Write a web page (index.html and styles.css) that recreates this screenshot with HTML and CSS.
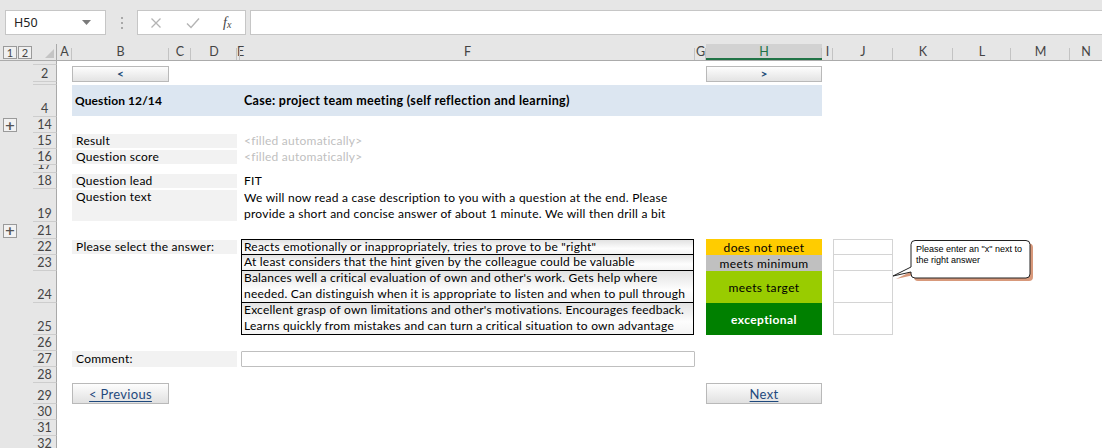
FILE: index.html
```html
<!DOCTYPE html>
<html>
<head>
<meta charset="utf-8">
<link rel="stylesheet" href="styles.css">
</head>
<body>
<div class="app">
  <div class="fbar">
    <div class="namebox">
      <span class="nb-text">H50</span>
      <svg class="nb-caret" width="9" height="5" viewBox="0 0 9 5"><path d="M0 0H9L4.5 5Z" fill="#7a7a7a"/></svg>
    </div>
    <div class="grip"><i></i><i></i><i></i></div>
    <div class="fxbox">
      <svg class="fx-icon" width="12" height="12" viewBox="0 0 12 12"><path d="M1.5 1.5L10.5 10.5M10.5 1.5L1.5 10.5" stroke="#b4b4b4" stroke-width="1.3" fill="none"/></svg>
      <svg class="fx-icon" width="14" height="12" viewBox="0 0 14 12"><path d="M1 6.5L5 10.5L13 1.5" stroke="#b4b4b4" stroke-width="1.4" fill="none"/></svg>
      <span class="fx">f<sub>x</sub></span>
    </div>
    <div class="finput"></div>
  </div>

  <div class="sheet">
    <div class="row hdr">
      <div class="ol hdr-ol"><span class="lvl">1</span><span class="lvl">2</span></div>
      <div class="corner"><svg width="9" height="9" viewBox="0 0 9 9"><path d="M9 0V9H0Z" fill="#c4c4c4"/></svg></div>
      <div class="ch">A</div>
      <div class="ch">B</div>
      <div class="ch">C</div>
      <div class="ch">D</div>
      <div class="ch ch-e">E</div>
      <div class="ch">F</div>
      <div class="ch">G</div>
      <div class="ch ch-sel">H</div>
      <div class="ch">I</div>
      <div class="ch">J</div>
      <div class="ch">K</div>
      <div class="ch">L</div>
      <div class="ch">M</div>
      <div class="ch ch-last">N</div>
    </div>

    <div class="row h4"><div class="ol"></div><div class="rh">1</div></div>

    <div class="row h17">
      <div class="ol"></div><div class="rh">2</div>
      <div class="gB navcell"><div class="navbtn">&lt;</div></div>
      <div class="gH navcell"><div class="navbtn">&gt;</div></div>
    </div>

    <div class="row h3"><div class="ol"></div><div class="rh rh-empty"></div></div>

    <div class="row h32">
      <div class="ol"></div><div class="rh">4</div>
      <div class="band"></div>
      <div class="gBD bandtxt bandtxt-q">Question 12/14</div>
      <div class="gF bandtxt">Case: project team meeting (self reflection and learning)</div>
    </div>

    <div class="row h16">
      <div class="ol"><span class="plus">+</span></div><div class="rh">14</div>
    </div>

    <div class="row h16">
      <div class="ol"></div><div class="rh">15</div>
      <div class="gBD lbl">Result</div>
      <div class="gF txt auto">&lt;filled automatically&gt;</div>
    </div>

    <div class="row h16">
      <div class="ol"></div><div class="rh">16</div>
      <div class="gBD lbl">Question score</div>
      <div class="gF txt auto">&lt;filled automatically&gt;</div>
    </div>

    <div class="row h8">
      <div class="ol"></div><div class="rh">17</div>
    </div>

    <div class="row h16">
      <div class="ol"></div><div class="rh">18</div>
      <div class="gBD lbl">Question lead</div>
      <div class="gF txt">FIT</div>
    </div>

    <div class="row h33">
      <div class="ol"></div><div class="rh">19</div>
      <div class="gBD lbl">Question text</div>
      <div class="gF txt">We will now read a case description to you with a question at the end. Please<br>provide a short and concise answer of about 1 minute. We will then drill a bit</div>
    </div>

    <div class="row h17">
      <div class="ol"><span class="plus">+</span></div><div class="rh">21</div>
    </div>

    <div class="row h16">
      <div class="ol"></div><div class="rh">22</div>
      <div class="gBD lbl">Please select the answer:</div>
      <div class="gF ans ans-first">Reacts emotionally or inappropriately, tries to prove to be "right"</div>
      <div class="gH rate r-no">does not meet</div>
      <div class="gJ xbox xbox-first"></div>
    </div>

    <div class="row h16">
      <div class="ol"></div><div class="rh">23</div>
      <div class="gF ans">At least considers that the hint given by the colleague could be valuable</div>
      <div class="gH rate r-min">meets minimum</div>
      <div class="gJ xbox"></div>
    </div>

    <div class="row h32">
      <div class="ol"></div><div class="rh">24</div>
      <div class="gF ans">Balances well a critical evaluation of own and other's work. Gets help where<br>needed. Can distinguish when it is appropriate to listen and when to pull through</div>
      <div class="gH rate r-tgt">meets target</div>
      <div class="gJ xbox"></div>
    </div>

    <div class="row h32">
      <div class="ol"></div><div class="rh">25</div>
      <div class="gF ans">Excellent grasp of own limitations and other's motivations. Encourages feedback.<br>Learns quickly from mistakes and can turn a critical situation to own advantage</div>
      <div class="gH rate r-exc">exceptional</div>
      <div class="gJ xbox"></div>
    </div>

    <div class="row h16"><div class="ol"></div><div class="rh">26</div></div>

    <div class="row h16">
      <div class="ol"></div><div class="rh">27</div>
      <div class="gBD lbl lbl-full">Comment:</div>
      <div class="gF comment"></div>
    </div>

    <div class="row h16"><div class="ol"></div><div class="rh">28</div></div>

    <div class="row h21">
      <div class="ol"></div><div class="rh">29</div>
      <div class="gB"><div class="bigbtn"><span>&lt; Previous</span></div></div>
      <div class="gH"><div class="bigbtn"><span>Next</span></div></div>
    </div>

    <div class="row h16"><div class="ol"></div><div class="rh">30</div></div>
    <div class="row h16"><div class="ol"></div><div class="rh">31</div></div>
    <div class="row h16"><div class="ol"></div><div class="rh">32</div></div>
  </div>

  <div class="callout">
    <svg class="callout-bg" width="145" height="46" viewBox="0 0 145 46">
      <path d="M23 1.5H134Q138 1.5 138 5.5V35Q138 39 134 39H23Q19 39 19 35V33L1 37L19 28V5.5Q19 1.5 23 1.5Z" fill="#d8997b" transform="translate(3 3)"/>
      <path d="M23 1.5H134Q138 1.5 138 5.5V35Q138 39 134 39H23Q19 39 19 35V33L1 37L19 28V5.5Q19 1.5 23 1.5Z" fill="#fff" stroke="#222" stroke-width="1"/>
    </svg>
    <div class="callout-text">Please enter an "x" next to<br>the right answer</div>
  </div>
</div>
</body>
</html>
```

FILE: styles.css
```css
* {
  box-sizing: border-box;
  margin: 0;
  padding: 0;
}

html, body {
  width: 1102px;
  height: 448px;
  overflow: hidden;
  background: #fff;
}

body {
  font-family: Lato, "Liberation Sans", sans-serif;
  font-size: 12px;
  color: #000;
}

.app {
  position: relative;
  width: 1102px;
  height: 448px;
  overflow: hidden;
}

/* formula bar */
.fbar {
  height: 44px;
  background: #e6e6e6;
  display: flex;
  align-items: flex-start;
  padding: 10px 0 0 5px;
}

.namebox {
  width: 101px;
  height: 25px;
  background: #fff;
  border: 1px solid #c6c6c6;
  display: flex;
  align-items: center;
  justify-content: space-between;
  padding: 0 14px 0 8px;
  font-family: "Noto Sans", "Open Sans", sans-serif;
  font-size: 12.5px;
  color: #222;
}

.grip {
  width: 31px;
  height: 25px;
  display: flex;
  flex-direction: column;
  align-items: center;
  justify-content: center;
  gap: 3px;
}

.grip i {
  display: block;
  width: 2px;
  height: 2px;
  background: #a8a8a8;
}

.fxbox {
  width: 109px;
  height: 25px;
  background: #fff;
  border: 1px solid #c6c6c6;
  display: flex;
  align-items: center;
  padding-left: 12px;
  gap: 24px;
}

.fx {
  font-family: "Liberation Serif", serif;
  font-style: italic;
  font-size: 14px;
  color: #444;
  margin-left: -1px;
}

.fx sub {
  font-size: 10px;
  vertical-align: -1px;
}

.finput {
  flex: 1;
  margin-left: 4px;
  height: 25px;
  background: #fff;
  border: 1px solid #c6c6c6;
  border-right: none;
}

/* sheet grid */
.row {
  display: grid;
  grid-template-columns: 33px 24px 15px 97px 22px 46px 3px 455px 11px 116px 11px 60px 60px 58px 59px 1fr;
  grid-template-rows: minmax(0, 1fr);
  overflow: hidden;
}

.row > * {
  grid-row: 1;
  min-width: 0;
  min-height: 0;
}

.h3 { height: 3px; }
.h4 { height: 4px; }
.h8 { height: 8px; }
.h16 { height: 16px; }
.h17 { height: 17px; }
.h21 { height: 21px; }
.h32 { height: 32px; }
.h33 { height: 33px; }

.ol {
  grid-column: 1;
  background: #e6e6e6;
  display: flex;
  align-items: center;
  padding-left: 3px;
}

.rh {
  grid-column: 2;
  background: #e6e6e6;
  border-right: 1px solid #a9a9a9;
  border-bottom: 1px solid #cdcdcd;
  display: flex;
  align-items: flex-end;
  justify-content: center;
  line-height: 15px;
  font-size: 12.5px;
  color: #444;
  overflow: hidden;
}

.plus {
  width: 14px;
  height: 14px;
  border: 1px solid #9a9a9a;
  background: #f2f2f2;
  display: flex;
  align-items: center;
  justify-content: center;
  font-family: "DejaVu Sans", sans-serif;
  font-size: 13px;
  font-weight: bold;
  line-height: 1;
  color: #555;
}

/* column headers */
.hdr {
  height: 17px;
  background: #e6e6e6;
  border-bottom: 1px solid #ababab;
}

.hdr-ol {
  gap: 1px;
  padding-left: 3px;
}

.lvl {
  width: 14px;
  height: 13px;
  border: 1px solid #9a9a9a;
  background: #f0f0f0;
  font-size: 11px;
  line-height: 11px;
  text-align: center;
  color: #444;
}

.corner {
  grid-column: 2;
  display: flex;
  align-items: flex-end;
  justify-content: flex-end;
  padding: 0 2px 2px 0;
  border-right: 1px solid #a9a9a9;
}

.ch {
  position: relative;
  text-align: center;
  font-size: 12.5px;
  line-height: 16px;
  color: #444;
  white-space: nowrap;
}

.ch::after {
  content: "";
  position: absolute;
  right: 0;
  top: 4px;
  bottom: 0;
  width: 1px;
  background: #c3c3c3;
}

.ch-e {
  text-align: left;
  text-indent: 0;
  overflow: visible;
}

.ch-sel {
  background: #d2d2d2;
  color: #217346;
  border-bottom: 2px solid #217346;
}

.ch-last::after {
  display: none;
}

/* column placement */
.gB { grid-column: 4; }
.gBD { grid-column: 4 / 7; }
.gF { grid-column: 8; }
.gH { grid-column: 10; }
.gJ { grid-column: 12; }

/* nav buttons */
.navcell {
  padding-top: 1px;
}

.navbtn {
  height: 16px;
  border: 1px solid #b9b9b9;
  background: linear-gradient(#fdfdfd, #e3e3e3);
  color: #1f4e79;
  font-size: 12px;
  font-weight: bold;
  text-align: center;
  line-height: 14px;
}

/* band */
.band {
  grid-column: 4 / 11;
  background: #dce6f1;
  margin-bottom: 1px;
}

.bandtxt {
  font-weight: bold;
  font-size: 12.5px;
  letter-spacing: 0.3px;
  display: flex;
  align-items: center;
  padding-left: 3px;
  padding-bottom: 1px;
  white-space: nowrap;
}

.bandtxt-q {
  font-size: 12px;
  letter-spacing: 0.1px;
}

.gF.bandtxt {
  padding-left: 4px;
}

/* labels and text */
.lbl {
  background: #f2f2f2;
  padding-left: 4px;
  margin: 1px 0;
  line-height: 14px;
  letter-spacing: 0.25px;
  display: flex;
  align-items: flex-start;
  white-space: nowrap;
}

.lbl-full {
  margin: 0;
  line-height: 16px;
}

.txt {
  padding-left: 4px;
  line-height: 16px;
  letter-spacing: 0.25px;
  display: flex;
  align-items: flex-end;
  white-space: nowrap;
}

.auto {
  color: #bfbfbf;
}

/* answer table */
.ans {
  margin-left: 1px;
  width: 453px;
  border-left: 1px solid #000;
  border-right: 1px solid #000;
  border-bottom: 1px solid #000;
  background: linear-gradient(#e2e2e2, #fdfdfd 60%, #f4f4f4);
  padding-left: 2px;
  line-height: 16px;
  letter-spacing: 0.22px;
  display: flex;
  align-items: flex-end;
  white-space: nowrap;
}

.ans-first {
  border-top: 1px solid #000;
  line-height: 15px;
}

.rate {
  display: flex;
  align-items: center;
  justify-content: center;
  font-size: 12px;
  letter-spacing: 0.4px;
  white-space: nowrap;
}

.r-no { background: #ffcc00; }
.r-min { background: #c0c0c0; }
.r-tgt { background: #99cc00; }
.r-exc { background: #008000; color: #fff; font-weight: bold; }

.xbox {
  border-left: 1px solid #d4d4d4;
  border-right: 1px solid #d4d4d4;
  border-bottom: 1px solid #d4d4d4;
}

.xbox-first {
  border-top: 1px solid #d4d4d4;
}

/* comment */
.comment {
  margin-left: 1px;
  border: 1px solid #bfbfbf;
  border-radius: 1px;
  background: #fff;
}

/* big buttons */
.bigbtn {
  height: 21px;
  border: 1px solid #b9b9b9;
  background: linear-gradient(#fdfdfd, #e1e1e1);
  display: flex;
  align-items: center;
  justify-content: center;
  color: #1f497d;
  font-size: 13px;
  letter-spacing: 0.3px;
}

.bigbtn span {
  text-decoration: underline;
  text-underline-offset: 2px;
}

/* callout */
.callout {
  position: absolute;
  left: 892px;
  top: 239px;
  width: 145px;
  height: 46px;
}

.callout-bg {
  position: absolute;
  left: 0;
  top: 0;
}

.callout-text {
  position: absolute;
  left: 24px;
  top: 5px;
  font-family: "Liberation Sans", sans-serif;
  font-size: 9px;
  line-height: 11px;
  color: #000;
  white-space: nowrap;
}
```
